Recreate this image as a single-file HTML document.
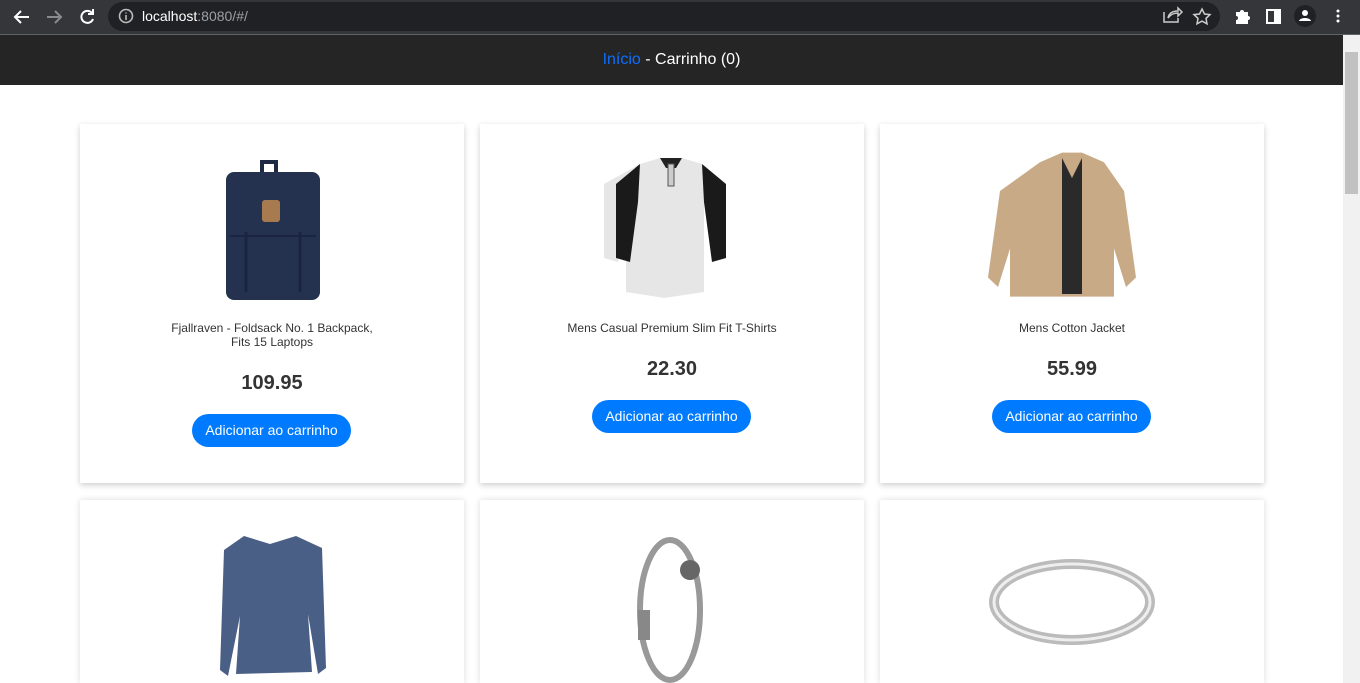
<!DOCTYPE html>
<html style="width:1360px;height:683px;overflow:hidden"><head><meta charset="utf-8"><style>
*{box-sizing:border-box;margin:0;padding:0}
body{width:1360px;height:683px;overflow:hidden;background:#fff;font-family:"Liberation Sans",Arial,sans-serif;position:relative}
.chrome{position:absolute;left:0;top:0;width:1360px;height:35px;background:#35363a;border-bottom:1px solid #5f6368}
.url{position:absolute;left:108px;top:2px;width:1112px;height:29px;border-radius:15px;background:#202124}
.url span{position:absolute;left:34px;top:6px;font-size:14px;color:#fff}
.url span i{font-style:normal;color:#9aa0a6}
.hdr{position:absolute;left:0;top:35px;width:1343px;height:50px;background:#252525;text-align:center;color:#fff;font-size:16px;line-height:50px}
.hdr a{color:#0d6efd;text-decoration:none}
.sb{position:absolute;left:1343px;top:35px;width:17px;height:648px;background:#f1f1f1}
.sb div{position:absolute;left:2px;top:17px;width:13px;height:142px;background:#c1c1c1}
.card{position:absolute;width:384px;height:359px;background:#fff;box-shadow:0 2px 6px rgba(0,0,0,.2);text-align:center;overflow:hidden}
.card.r2{height:183px;box-shadow:0 0 6px rgba(0,0,0,.15)}
.card svg{position:absolute}
.t{position:absolute;left:0;width:100%;font-size:12px;color:#333;line-height:14px}
.p{position:absolute;left:0;width:100%;font-size:20px;font-weight:bold;color:#333}
.b{position:absolute;left:112px;width:159px;height:33px;border-radius:17px;background:#007bff;color:#fff;font-size:14px;line-height:33px}
</style></head><body>
<div class="chrome">
<svg width="110" height="35" style="position:absolute;left:0;top:0" fill="none" stroke-width="2">
<path d="M29 17H15M21 11l-6 6 6 6" stroke="#fff"/>
<path d="M47 17h14M55 11l6 6-6 6" stroke="#8a8b8e"/>
<path d="M92 13a6 6 0 1 0 1 6" stroke="#fff"/><path d="M93 9v5h-5" stroke="#fff"/>
</svg>
<div class="url"><svg width="20" height="20" style="position:absolute;left:9px;top:5px"><circle cx="9" cy="9" r="6.5" stroke="#bbb" stroke-width="1.6" fill="none"/><path d="M9 8v5M9 5.5v1" stroke="#bbb" stroke-width="1.6"/></svg><span>localhost<i>:8080/#/</i></span></div>
<svg width="200" height="35" style="position:absolute;left:1160px;top:0" fill="none" stroke="#ccc" stroke-width="1.5">
<path d="M4 12v10h14v-4M8 18c1-5 5-7 10-7V8l4 4-4 4v-3c-4 0-7 1-10 5"/>
<path d="M42 9l2.5 5 5.5.6-4 3.8 1 5.4-5-2.7-5 2.7 1-5.4-4-3.8 5.5-.6z"/>
<path d="M76 12h4a2 2 0 0 1 4 0h4v4a2 2 0 0 1 0 4v4H76v-4a2 2 0 0 0 0-4z" fill="#fff" stroke="none"/>
<rect x="107" y="10" width="13" height="13" stroke="#fff" stroke-width="2"/><rect x="114" y="10" width="6" height="13" fill="#fff" stroke="none"/>
<circle cx="145" cy="16" r="11" fill="#202124" stroke="none"/><circle cx="145" cy="13" r="3" fill="#fff" stroke="none"/><path d="M139 21c1-4 11-4 12 0z" fill="#fff" stroke="none"/>
<circle cx="178" cy="11" r="1.5" fill="#fff" stroke="none"/><circle cx="178" cy="16" r="1.5" fill="#fff" stroke="none"/><circle cx="178" cy="21" r="1.5" fill="#fff" stroke="none"/>
</svg>
</div>
<div class="hdr"><a>Início</a> - Carrinho (0)</div>
<div class="sb"><div></div></div>

<div class="card" style="left:80px;top:124px">
<svg width="384" height="200" style="left:0;top:0"><path d="M182 38h14v14h-14z" fill="none" stroke="#1e2a44" stroke-width="4"/><rect x="146" y="48" width="94" height="128" rx="8" fill="#25324f"/><rect x="182" y="76" width="18" height="22" rx="3" fill="#a87a4f"/><path d="M166 108v60M220 108v60" stroke="#1a2440" stroke-width="3"/><path d="M150 112h86" stroke="#1a2440" stroke-width="2"/></svg>
<div class="t" style="top:197px">Fjallraven - Foldsack No. 1 Backpack,<br>Fits 15 Laptops</div>
<div class="p" style="top:248px">109.95</div>
<div class="b" style="top:290px">Adicionar ao carrinho</div></div>

<div class="card" style="left:480px;top:124px">
<svg width="384" height="200" style="left:0;top:0"><path d="M160 40l20-6h22l20 6 24 20 0 74-14 4-8-60v90l-40 6-38-6v-90l-8 60-14-4v-74z" fill="#e6e6e6"/><path d="M160 40l-24 20v74l14 4 8-60zM222 40l24 20v74l-14 4-8-60z" fill="#1a1a1a"/><path d="M180 34h22l-6 10h-10z" fill="#222"/><rect x="188" y="40" width="6" height="22" fill="#ccc" stroke="#555"/></svg>
<div class="t" style="top:197px">Mens Casual Premium Slim Fit T-Shirts</div>
<div class="p" style="top:234px">22.30</div>
<div class="b" style="top:276px">Adicionar ao carrinho</div></div>

<div class="card" style="left:880px;top:124px">
<svg width="384" height="200" style="left:0;top:0"><path d="M160 44l22-10h20l22 10 20 30 12 90-10 10-12-40 0 50h-104l0-50-12 40-10-10 12-90z" fill="#c8aa86" transform="translate(0,-4) scale(1,0.96)"/><path d="M182 34l10 20 10-20v136h-20z" fill="#2a2a2a"/></svg>
<div class="t" style="top:197px">Mens Cotton Jacket</div>
<div class="p" style="top:234px">55.99</div>
<div class="b" style="top:276px">Adicionar ao carrinho</div></div>

<div class="card r2" style="left:80px;top:500px">
<svg width="384" height="200" style="left:0;top:0"><path d="M164 36l26 8 26-8 26 12 4 120-8 6-10-60 4 58-76 2 4-58-12 60-8-6 4-120z" fill="#4a5f86"/></svg></div>
<div class="card r2" style="left:480px;top:500px">
<svg width="384" height="200" style="left:0;top:0"><ellipse cx="190" cy="110" rx="30" ry="70" fill="none" stroke="#999" stroke-width="6"/><circle cx="210" cy="70" r="10" fill="#666"/><rect x="158" y="110" width="12" height="30" fill="#888"/></svg></div>
<div class="card r2" style="left:880px;top:500px">
<svg width="384" height="200" style="left:0;top:0"><ellipse cx="192" cy="102" rx="78" ry="38" fill="none" stroke="#bbb" stroke-width="10"/><ellipse cx="192" cy="102" rx="78" ry="38" fill="none" stroke="#eee" stroke-width="3"/></svg></div>
</body></html>
